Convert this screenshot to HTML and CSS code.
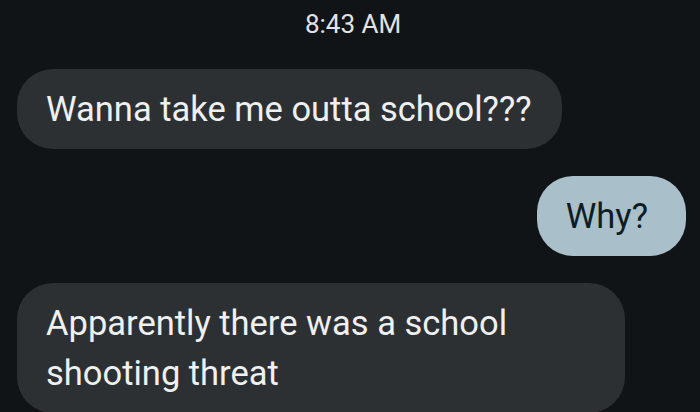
FILE: index.html
```html
<!DOCTYPE html>
<html lang="en">
<head>
<meta charset="utf-8">
<title>Messages</title>
<link rel="stylesheet" href="styles.css">
</head>
<body>
  <main class="thread">
    <div class="time">8:43 AM</div>
    <div class="row in">
      <div class="bubble incoming">Wanna take me outta school???</div>
    </div>
    <div class="row out">
      <div class="bubble outgoing">Why?</div>
    </div>
    <div class="row in">
      <div class="bubble incoming">Apparently there was a school shooting threat</div>
    </div>
  </main>
</body>
</html>
```
FILE: styles.css
```css
html, body {
  margin: 0;
  padding: 0;
  background: #111416;
  height: 100%;
  overflow: hidden;
}

.thread {
  display: flex;
  flex-direction: column;
  gap: 27px;
  padding: 9px 14px 0 17px;
  font-family: Roboto, "Noto Sans", sans-serif;
}

.time {
  text-align: center;
  font-size: 26px;
  line-height: 30px;
  color: #e2e3e4;
  margin-bottom: 3px;
  padding-left: 3px;
}

.row {
  display: flex;
}

.row.in {
  justify-content: flex-start;
}

.row.out {
  justify-content: flex-end;
}

.bubble {
  font-size: 34.5px;
  line-height: 50px;
  padding: 15px 30px 15px 29px;
  border-radius: 36px;
  max-width: 549px;
}

.incoming {
  background: #2d3033;
  color: #eef0f1;
}

.outgoing {
  background: #a9bfca;
  color: #0f1c23;
  padding-right: 38px;
}
```
